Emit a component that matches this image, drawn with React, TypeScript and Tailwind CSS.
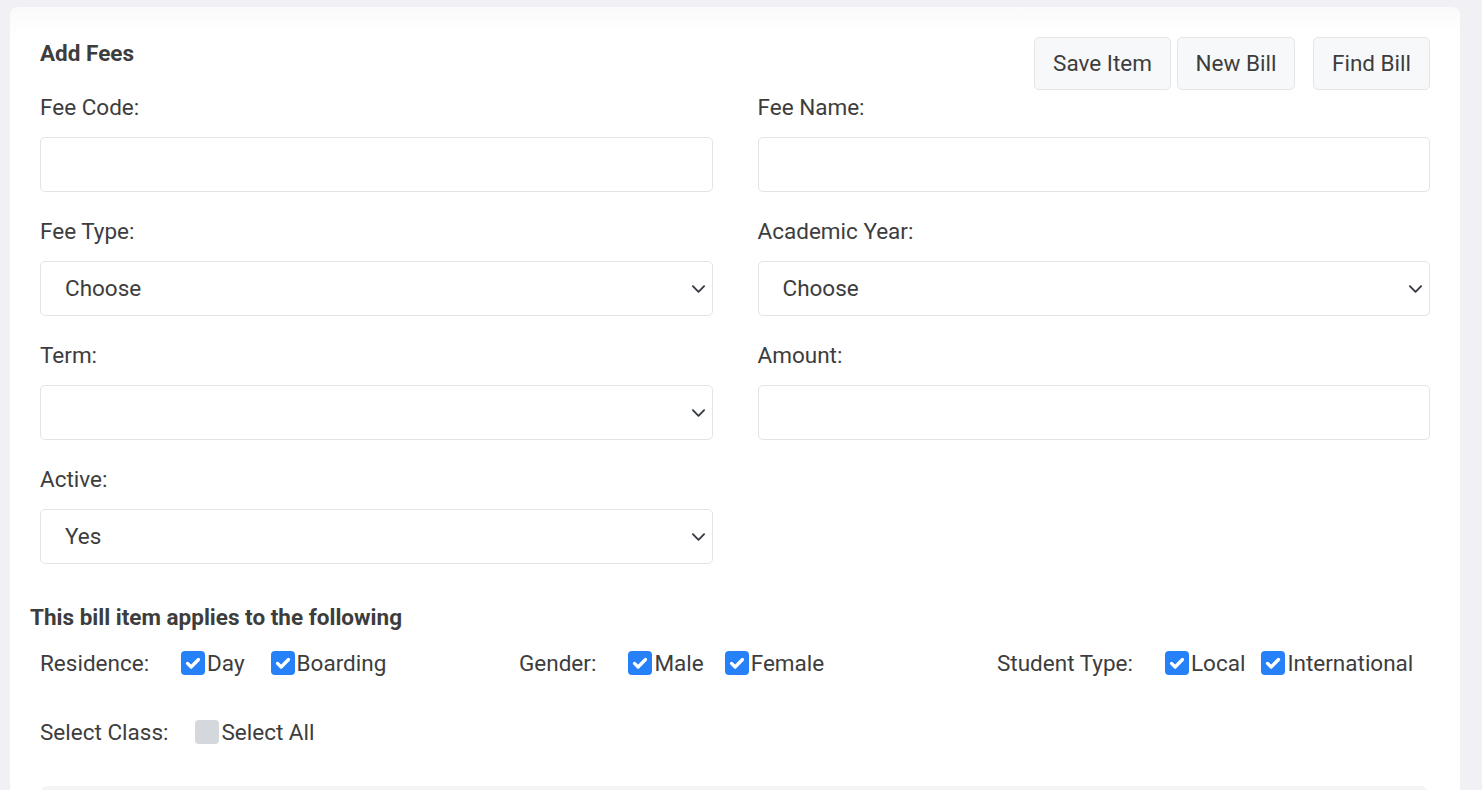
import React from "react";

const font = { fontFamily: "Roboto, 'Noto Sans', sans-serif" };

function Chevron() {
  return (
    <svg
      className="pointer-events-none absolute right-[7px] top-1/2 -translate-y-1/2"
      width="15"
      height="15"
      viewBox="0 0 16 16"
      fill="none"
    >
      <path d="M2 5l6 6 6-6" stroke="#343a40" strokeWidth="2" strokeLinecap="round" strokeLinejoin="round" />
    </svg>
  );
}

function Field({ label, children }: { label: string; children: React.ReactNode }) {
  return (
    <div className="flex flex-col">
      <label className="mb-[15px] h-[30px] text-[22.5px] leading-[30px] text-[#3d3d3d]">{label}</label>
      {children}
    </div>
  );
}

function TextInput() {
  return (
    <input
      type="text"
      className="h-[55px] w-full rounded-[5px] border border-[#e2e4e8] bg-white px-[24px] text-[22.5px] text-[#3d3d3d] outline-none"
    />
  );
}

function Select({ value, options }: { value: string; options: string[] }) {
  return (
    <div className="relative">
      <select
        defaultValue={value}
        className="h-[55px] w-full appearance-none rounded-[5px] border border-[#e2e4e8] bg-white px-[24px] text-[22.5px] text-[#3d3d3d] outline-none"
      >
        {options.map((o) => (
          <option key={o} value={o}>
            {o}
          </option>
        ))}
      </select>
      <Chevron />
    </div>
  );
}

function Check({ label, checked = true }: { label: string; checked?: boolean }) {
  return (
    <label className="flex items-center gap-[2px]">
      <span
        className={
          checked
            ? "flex h-[24px] w-[24px] items-center justify-center rounded-[4px] bg-[#2680f7]"
            : "flex h-[24px] w-[24px] items-center justify-center rounded-[4px] bg-[#d4d7db]"
        }
      >
        {checked && (
          <svg width="20" height="20" viewBox="0 0 16 16" fill="none">
            <path d="M3.6 8.3l2.9 2.9L12.4 5.2" stroke="white" strokeWidth="2.6" strokeLinecap="round" strokeLinejoin="round" />
          </svg>
        )}
      </span>
      <span className="text-[22.5px] leading-[30px] text-[#3d3d3d]">{label}</span>
    </label>
  );
}

function Btn({ children, className = "" }: { children: React.ReactNode; className?: string }) {
  return (
    <button
      className={
        "h-[53px] rounded-[5px] border border-[#e3e5e9] bg-[#f7f8fa] text-[22.5px] text-[#3d3d3d] " + className
      }
    >
      {children}
    </button>
  );
}

export default function App() {
  return (
    <div className="min-h-[790px] w-full bg-[#f0f0f5] pt-[7px]" style={font}>
      <div className="ml-[10px] w-[1450px] rounded-t-[8px] bg-gradient-to-b from-[#fafafb] to-white to-[30px] px-[30px] pt-[30px]">
        {/* Header */}
        <div className="flex h-[53px] items-start justify-between">
          <h2 className="mt-[2px] text-[22.5px] font-bold leading-[28px] text-[#3d3d3d]">Add Fees</h2>
          <div className="flex">
            <Btn className="w-[137px]">Save Item</Btn>
            <Btn className="ml-[6px] w-[118px]">New Bill</Btn>
            <Btn className="ml-[18px] w-[117px]">Find Bill</Btn>
          </div>
        </div>

        {/* Form */}
        <div className="mt-[2px] grid grid-cols-2 gap-x-[45px] gap-y-[24px]">
          <Field label="Fee Code:">
            <TextInput />
          </Field>
          <Field label="Fee Name:">
            <TextInput />
          </Field>
          <Field label="Fee Type:">
            <Select value="Choose" options={["Choose", "Tuition", "Boarding"]} />
          </Field>
          <Field label="Academic Year:">
            <Select value="Choose" options={["Choose", "2023/2024", "2024/2025"]} />
          </Field>
          <Field label="Term:">
            <Select value="" options={["", "Term 1", "Term 2", "Term 3"]} />
          </Field>
          <Field label="Amount:">
            <TextInput />
          </Field>
          <Field label="Active:">
            <Select value="Yes" options={["Yes", "No"]} />
          </Field>
        </div>

        {/* Applies to */}
        <h3 className="-ml-[10px] mt-[39px] text-[22.5px] font-bold leading-[28px] text-[#3d3d3d]">
          This bill item applies to the following
        </h3>

        <div className="mt-[17px] grid grid-cols-[479px_478px_1fr] text-[22.5px] leading-[30px] text-[#3d3d3d]">
          <div className="flex items-center">
            <span className="mr-[32px]">Residence:</span>
            <Check label="Day" />
            <span className="w-[26px]" />
            <Check label="Boarding" />
          </div>
          <div className="flex items-center">
            <span className="mr-[32px]">Gender:</span>
            <Check label="Male" />
            <span className="w-[21px]" />
            <Check label="Female" />
          </div>
          <div className="flex items-center">
            <span className="mr-[32px]">Student Type:</span>
            <Check label="Local" />
            <span className="w-[16px]" />
            <Check label="International" />
          </div>
        </div>

        <div className="mt-[39px] flex items-center text-[22.5px] leading-[30px] text-[#3d3d3d]">
          <span className="mr-[27px]">Select Class:</span>
          <Check label="Select All" checked={false} />
        </div>

        <div className="mt-[39px] h-[80px] w-[1388px] rounded-t-[8px] bg-[#f3f4f6]" />
      </div>
    </div>
  );
}
